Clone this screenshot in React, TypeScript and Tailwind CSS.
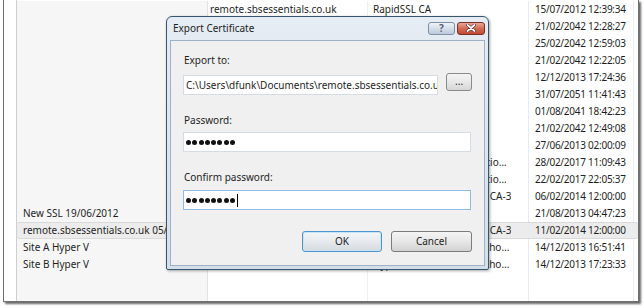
import React from 'react';

type Row = { friendly: string; name: string; issuer: string; expires: string };

const rows: Row[] = [
  { friendly: '', name: 'remote.sbsessentials.co.uk', issuer: 'RapidSSL CA', expires: '15/07/2012 12:39:34' },
  { friendly: '', name: 'SBS2011', issuer: 'SBS2011', expires: '21/02/2042 12:28:27' },
  { friendly: '', name: 'sbs2011.sbs.local', issuer: 'SBS2011', expires: '25/02/2042 12:59:03' },
  { friendly: '', name: 'SBS2011', issuer: 'SBS2011', expires: '21/02/2042 12:22:05' },
  { friendly: '', name: 'remote.sbsessentials.co.uk', issuer: 'sbs-SBS2011-CA', expires: '12/12/2013 17:24:36' },
  { friendly: '', name: 'WMSvc-SBS2011', issuer: 'WMSvc-SBS2011', expires: '31/07/2051 11:41:43' },
  { friendly: '', name: 'sbs-SBS2011-CA', issuer: 'sbs-SBS2011-CA', expires: '01/08/2041 18:42:23' },
  { friendly: '', name: 'SBS2011', issuer: 'SBS2011', expires: '21/02/2042 12:49:08' },
  { friendly: '', name: 'localhost', issuer: 'localhost', expires: '27/06/2013 02:00:09' },
  { friendly: '', name: 'Windows Azure Tools', issuer: 'Windows Azure Certification Authority', expires: '28/02/2017 11:09:43' },
  { friendly: '', name: 'Windows Azure Tools', issuer: 'Windows Azure Certification Authority', expires: '22/02/2017 22:05:37' },
  { friendly: '', name: 'remote.sbsessentials.co.uk', issuer: 'DigiCert High Assurance CA-3', expires: '06/02/2014 12:00:00' },
  { friendly: 'New SSL 19/06/2012', name: 'remote.sbsessentials.co.uk', issuer: '', expires: '21/08/2013 04:47:23' },
  { friendly: 'remote.sbsessentials.co.uk 05/06/2013', name: 'remote.sbsessentials.co.uk', issuer: 'DigiCert High Assurance CA-3', expires: '11/02/2014 12:00:00' },
  { friendly: 'Site A Hyper V', name: 'sitea-hv01', issuer: 'Hyper-V Certification Authority', expires: '14/12/2013 16:51:41' },
  { friendly: 'Site B Hyper V', name: 'siteb-hv01', issuer: 'Hyper-V Certification Authority', expires: '14/12/2013 17:23:33' },
];

const SELECTED = 13;

function PasswordDots({ caret }: { caret?: boolean }) {
  return (
    <div className="flex items-center gap-[1.3px] pl-[2px]">
      {Array.from({ length: 8 }).map((_, i) => (
        <div key={i} className="w-[5px] h-[5px] rounded-full bg-[#111]" />
      ))}
      {caret && <div className="w-px h-[13px] bg-black ml-[1px]" />}
    </div>
  );
}

function ExportDialog() {
  return (
    <div className="absolute left-[166px] top-[16px] w-[323px] h-[254px] flex flex-col rounded-t-[6px] rounded-b-[2px] border border-[#34566f] bg-gradient-to-b from-[#e6ecf3] to-[#d5dfea] shadow-[1px_1px_3px_rgba(0,0,0,0.35)]">
      <div className="h-[23px] flex items-center justify-between pl-[6px] pr-[3px]">
        <span className="text-[10px] text-[#1b1f26]">Export Certificate</span>
        <div className="flex gap-[2px] mb-[1px]">
          <div className="w-[27px] h-[13px] rounded-[3px] border border-[#7f8fa3] bg-gradient-to-b from-[#eef3f8] via-[#d5dfe9] to-[#bccadb] flex items-center justify-center">
            <span className="text-[10px] leading-none font-bold text-[#55606c] [text-shadow:0_0_1px_#fff]">?</span>
          </div>
          <div className="w-[28px] h-[13px] rounded-[3px] border border-[#7a3024] bg-gradient-to-b from-[#e9a898] via-[#d26a55] to-[#c24a36] flex items-center justify-center">
            <svg width="12" height="8" viewBox="0 0 12 8">
              <path d="M2.5 1 L9.5 7 M9.5 1 L2.5 7" stroke="#5a2a22" strokeWidth="3" strokeLinecap="round" />
              <path d="M2.5 1 L9.5 7 M9.5 1 L2.5 7" stroke="#fff" strokeWidth="1.7" strokeLinecap="round" />
            </svg>
          </div>
        </div>
      </div>
      <div className="flex-1 mx-[3px] mb-[3px] border border-[#9fb1c4] bg-[#f0f0f0] flex flex-col px-[12px] pt-[12px] text-[10px] text-[#1e1e1e]">
        <div className="h-[14px] leading-[14px] pl-px">Export to:</div>
        <div className="flex items-start gap-[8px] mt-[8px]">
          <div className="w-[257px] h-[20px] bg-white border border-[#d5dbe2] flex items-center pl-[2px] overflow-hidden whitespace-nowrap">
            C:\Users\dfunk\Documents\remote.sbsessentials.co.uk
          </div>
          <div className="w-[26px] h-[18px] -mt-[2px] rounded-[3px] border border-[#8a8a8a] bg-gradient-to-b from-[#f4f4f4] via-[#e8e8e8] to-[#d6d6d6] flex items-center justify-center">
            <span className="leading-none -mt-[3px]">...</span>
          </div>
        </div>
        <div className="h-[14px] leading-[14px] pl-px mt-[18px]">Password:</div>
        <div className="w-[288px] h-[20px] mt-[5px] bg-white border border-[#d5dbe2] flex items-center">
          <PasswordDots />
        </div>
        <div className="h-[14px] leading-[14px] pl-px mt-[18px]">Confirm password:</div>
        <div className="w-[288px] h-[20px] mt-[6px] bg-white border border-[#8fbce6] flex items-center">
          <PasswordDots caret />
        </div>
        <div className="flex justify-end gap-[9px] mt-[21px]">
          <div className="w-[80px] h-[21px] rounded-[3px] border border-[#4f95cc] bg-gradient-to-b from-[#f3f6f8] via-[#e6eaee] to-[#d4dade] flex items-center justify-center shadow-[inset_0_0_0_1px_#c9e4f7]">
            OK
          </div>
          <div className="w-[81px] h-[21px] rounded-[3px] border border-[#7b7b7b] bg-gradient-to-b from-[#f4f4f4] via-[#e7e7e7] to-[#d2d2d2] flex items-center justify-center">
            Cancel
          </div>
        </div>
      </div>
    </div>
  );
}

function CertRow({ row, selected }: { row: Row; selected: boolean }) {
  return (
    <div
      className={`flex h-[17px] items-center ${
        selected ? 'bg-[#ececec] border-y border-[#d9d9d9] rounded-[2px]' : ''
      }`}
    >
      <div className={`w-[191px] h-full flex items-center pl-[6px] border-r border-[#e2e2e2] truncate ${selected ? '' : 'bg-[#f6f6f6]'}`}>
        <span className="truncate">{row.friendly}</span>
      </div>
      <div className="w-[160px] h-full flex items-center pl-[2px] border-r border-[#eceff3]">
        <span className="truncate">{row.name}</span>
      </div>
      <div className="w-[161px] h-full flex items-center pl-[5px] pr-[16px] border-r border-[#e4ebf4]">
        <span className="truncate">{row.issuer}</span>
      </div>
      <div className="w-[105px] h-full flex items-center pl-[6px] border-r border-[#e8eef5] tracking-[-0.25px]">
        <span className="whitespace-nowrap">{row.expires}</span>
      </div>
      <div className="flex-1 h-full" />
    </div>
  );
}

export default function App() {
  return (
    <div className="relative w-[644px] h-[308px] bg-white overflow-hidden font-['Noto_Sans',sans-serif] text-[10px] text-[#1e1e1e]">
      <div className="ml-[3px] w-[636px] h-[302px] flex border-l border-r border-b border-[#6f6f6f] shadow-[2px_2px_2px_rgba(0,0,0,0.6)]">
        <div className="w-[12px] h-full bg-white" />
        <div className="flex-1 h-full flex flex-col border-l border-[#cfcfcf] pt-px">
          {rows.map((row, i) => (
            <CertRow key={i} row={row} selected={i === SELECTED} />
          ))}
          <div className="flex-1 flex">
            <div className="w-[191px] h-full bg-[#f6f6f6] border-r border-[#e2e2e2]" />
            <div className="w-[160px] h-full border-r border-[#eceff3]" />
            <div className="w-[161px] h-full border-r border-[#e4ebf4]" />
            <div className="w-[105px] h-full border-r border-[#e8eef5]" />
            <div className="flex-1 h-full" />
          </div>
        </div>
      </div>
      <ExportDialog />
    </div>
  );
}
